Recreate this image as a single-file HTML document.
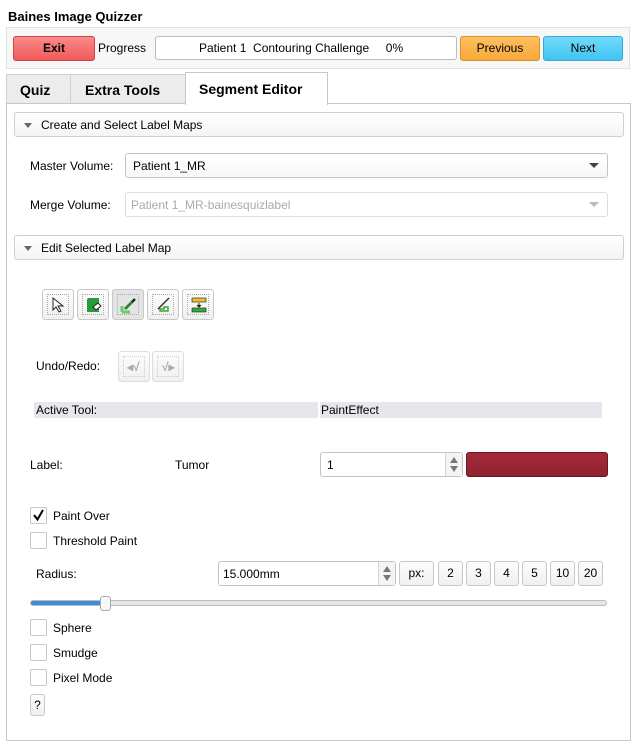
<!DOCTYPE html>
<html><head><meta charset="utf-8"><style>
*{box-sizing:border-box}
body{margin:0;width:632px;height:747px;background:#fff;font-family:"Liberation Sans",sans-serif;font-size:12px;color:#000;position:relative;overflow:hidden}
.a{position:absolute}
.t{position:absolute;line-height:14px;white-space:nowrap}
.btn{position:absolute;border:1px solid #c8c8c8;border-radius:3px;background:linear-gradient(#fdfdfd,#f0f0f0);text-align:center}
.cb{position:absolute;width:17px;height:17px;border:1px solid #c8c8c8;border-radius:2px;background:#fff}
.hdr{position:absolute;left:14px;width:610px;height:25px;border:1px solid #cfcfcf;border-radius:3px;background:linear-gradient(#fff,#f4f4f4)}
.hdr span{position:absolute;left:26px;top:5px}
.hdr i{position:absolute;left:9px;top:10px;width:0;height:0;border-left:4px solid transparent;border-right:4px solid transparent;border-top:5px solid #666}
.tool{position:absolute;top:289px;width:32px;height:31px;border:1px solid #c8c8c8;border-radius:3px;background:linear-gradient(#fdfdfd,#f0f0f0)}
.tool b{position:absolute;left:4px;top:4px;width:22px;height:21px;border:1px dotted #aaa}
.sp{position:absolute;border:1px solid #c4c4c4;border-radius:3px;background:#fff}
.arr{position:absolute;right:0;top:0;bottom:0;width:17px;border-left:1px solid #d4d4d4;background:#f4f4f4}
.arr:before{content:"";position:absolute;left:4px;top:4px;border-left:4px solid transparent;border-right:4px solid transparent;border-bottom:6px solid #777}
.arr:after{content:"";position:absolute;left:4px;bottom:4px;border-left:4px solid transparent;border-right:4px solid transparent;border-top:6px solid #777}
.tab{position:absolute;font-weight:bold;font-size:14px;line-height:16px;white-space:nowrap}
</style></head><body>
<div class="t" style="left:8px;top:10px;font-weight:bold;font-size:13px">Baines Image Quizzer</div>
<div class="a" style="left:6px;top:27px;width:624px;height:42px;border:1px solid #e0e0e0;background:#f7f7f7"></div>
<div class="btn" style="left:13px;top:36px;width:82px;height:25px;background:linear-gradient(#fa8a8a,#f05a5a);border-color:#c44;font-weight:bold;line-height:23px">Exit</div>
<div class="t" style="left:98px;top:41px">Progress</div>
<div class="a" style="left:155px;top:36px;width:302px;height:24px;border:1px solid #bbb;border-radius:3px;background:#fff"></div>
<div class="t" style="left:199px;top:41px">Patient 1&nbsp; Contouring Challenge&nbsp;&nbsp;&nbsp;&nbsp; 0%</div>
<div class="btn" style="left:460px;top:36px;width:80px;height:25px;background:linear-gradient(#fcc060,#f9a83a);border-color:#d8902a;line-height:23px">Previous</div>
<div class="btn" style="left:543px;top:36px;width:80px;height:25px;background:linear-gradient(#72dafa,#40c4f0);border-color:#3aa8d0;line-height:23px">Next</div>
<div class="a" style="left:6px;top:74px;width:65px;height:30px;border:1px solid #d0d0d0;background:#ececec"></div>
<div class="tab" style="left:20px;top:82px">Quiz</div>
<div class="a" style="left:70px;top:74px;width:116px;height:30px;border:1px solid #d0d0d0;background:#ececec"></div>
<div class="tab" style="left:85px;top:82px">Extra Tools</div>
<div class="a" style="left:6px;top:103px;width:625px;height:638px;border:1px solid #c8c8c8;background:#fff"></div>
<div class="a" style="left:185px;top:72px;width:143px;height:33px;border:1px solid #c8c8c8;border-bottom:none;background:#fff"></div>
<div class="tab" style="left:199px;top:81px">Segment Editor</div>
<div class="hdr" style="top:112px"><i></i><span>Create and Select Label Maps</span></div>
<div class="t" style="left:30px;top:159px">Master Volume:</div>
<div class="sp" style="left:125px;top:153px;width:483px;height:25px;background:linear-gradient(#fff,#f7f7f7)"></div>
<div class="t" style="left:133px;top:159px">Patient 1_MR</div>
<div class="a" style="left:589px;top:163px;border-left:5px solid transparent;border-right:5px solid transparent;border-top:5px solid #444"></div>
<div class="t" style="left:30px;top:198px">Merge Volume:</div>
<div class="sp" style="left:125px;top:192px;width:483px;height:25px;border-color:#ddd"></div>
<div class="t" style="left:131px;top:198px;color:#aaa">Patient 1_MR-bainesquizlabel</div>
<div class="a" style="left:589px;top:202px;border-left:5px solid transparent;border-right:5px solid transparent;border-top:5px solid #bbb"></div>
<div class="hdr" style="top:235px"><i></i><span>Edit Selected Label Map</span></div>
<div class="tool" style="left:42px"><b></b><svg class="a" style="left:8px;top:7px" width="16" height="16"><path d="M2 1 L2 13 L5 10 L8 15 L10 14 L7 9 L12 9 Z" fill="#fff" stroke="#222"/></svg></div>
<div class="tool" style="left:77px"><b></b><svg class="a" style="left:8px;top:7px" width="17" height="16"><path d="M1 3 Q1 1 3 1 L13 1 L13 15 L1 15 Z" fill="#2a9a3a"/><path d="M7 10 L12 6 L15 9 L10 13 Z" fill="#fff" stroke="#222"/></svg></div>
<div class="tool" style="left:112px;background:#e4e4e4"><b></b><svg class="a" style="left:7px;top:6px" width="18" height="18"><path d="M2 16 L2 10 M2 16 L10 16" stroke="#6c6" stroke-width="3"/><path d="M5 13 L15 3" stroke="#222" stroke-width="2.5"/><path d="M5 13 L12 6" stroke="#2a2" stroke-width="1.5"/></svg></div>
<div class="tool" style="left:147px"><b></b><svg class="a" style="left:7px;top:6px" width="18" height="18"><path d="M5 15 L5 13 L9 13 L9 11 L13 11 L13 15 Z" fill="none" stroke="#3a3" stroke-width="1.5"/><path d="M3 13 L14 2" stroke="#333" stroke-width="1.5"/></svg></div>
<div class="tool" style="left:182px"><b></b><svg class="a" style="left:8px;top:7px" width="16" height="16"><rect x="1" y="1" width="14" height="4" fill="#f0c020" stroke="#333" stroke-width=".7"/><path d="M8 6 L8 9 M6 8 L8 10 L10 8" stroke="#222"/><rect x="1" y="11" width="14" height="4" fill="#3a3" stroke="#333" stroke-width=".7"/></svg></div>
<div class="t" style="left:36px;top:359px">Undo/Redo:</div>
<div class="tool" style="left:118px;top:351px;border-color:#ddd"><b style="border-color:#ccc"></b><span class="t" style="left:8px;top:8px;color:#aaa;font-weight:bold">◂√</span></div>
<div class="tool" style="left:152px;top:351px;border-color:#ddd"><b style="border-color:#ccc"></b><span class="t" style="left:9px;top:8px;color:#aaa;font-weight:bold">√▸</span></div>
<div class="a" style="left:34px;top:402px;width:284px;height:16px;background:#e8e6ec"></div>
<div class="a" style="left:320px;top:402px;width:282px;height:16px;background:#e8e6ec"></div>
<div class="t" style="left:36px;top:403px">Active Tool:</div>
<div class="t" style="left:321px;top:403px">PaintEffect</div>
<div class="t" style="left:30px;top:458px">Label:</div>
<div class="t" style="left:175px;top:458px">Tumor</div>
<div class="sp" style="left:320px;top:452px;width:143px;height:25px"><div class="arr"></div></div>
<div class="t" style="left:327px;top:458px">1</div>
<div class="a" style="left:466px;top:452px;width:142px;height:25px;border:1px solid #6a1520;border-radius:3px;background:linear-gradient(#a52a38,#8f2230)"></div>
<div class="cb" style="left:30px;top:507px"></div>
<svg class="a" style="left:30px;top:507px" width="17" height="17"><path d="M4 8 L7.5 12.5 L13 3" fill="none" stroke="#000" stroke-width="2"/></svg>
<div class="t" style="left:53px;top:509px">Paint Over</div>
<div class="cb" style="left:30px;top:532px"></div>
<div class="t" style="left:53px;top:534px">Threshold Paint</div>
<div class="t" style="left:36px;top:567px">Radius:</div>
<div class="sp" style="left:218px;top:561px;width:178px;height:25px"><div class="arr"></div></div>
<div class="t" style="left:223px;top:567px">15.000mm</div>
<div class="btn" style="left:399px;top:561px;width:35px;height:25px;line-height:23px">px:</div>
<div class="btn" style="left:438px;top:561px;width:25px;height:25px;line-height:23px">2</div>
<div class="btn" style="left:466px;top:561px;width:25px;height:25px;line-height:23px">3</div>
<div class="btn" style="left:494px;top:561px;width:25px;height:25px;line-height:23px">4</div>
<div class="btn" style="left:522px;top:561px;width:25px;height:25px;line-height:23px">5</div>
<div class="btn" style="left:550px;top:561px;width:25px;height:25px;line-height:23px">10</div>
<div class="btn" style="left:578px;top:561px;width:25px;height:25px;line-height:23px">20</div>
<div class="a" style="left:30px;top:600px;width:577px;height:6px;border:1px solid #bbb;border-radius:3px;background:#e6e6e6"></div>
<div class="a" style="left:31px;top:601px;width:72px;height:4px;border-radius:2px;background:#3a8fd6"></div>
<div class="a" style="left:100px;top:596px;width:11px;height:15px;border:1px solid #aaa;border-radius:3px;background:#f8f8f8"></div>
<div class="cb" style="left:30px;top:619px"></div>
<div class="t" style="left:53px;top:621px">Sphere</div>
<div class="cb" style="left:30px;top:644px"></div>
<div class="t" style="left:53px;top:646px">Smudge</div>
<div class="cb" style="left:30px;top:669px"></div>
<div class="t" style="left:53px;top:671px">Pixel Mode</div>
<div class="btn" style="left:30px;top:694px;width:15px;height:22px;line-height:20px">?</div>
</body></html>
